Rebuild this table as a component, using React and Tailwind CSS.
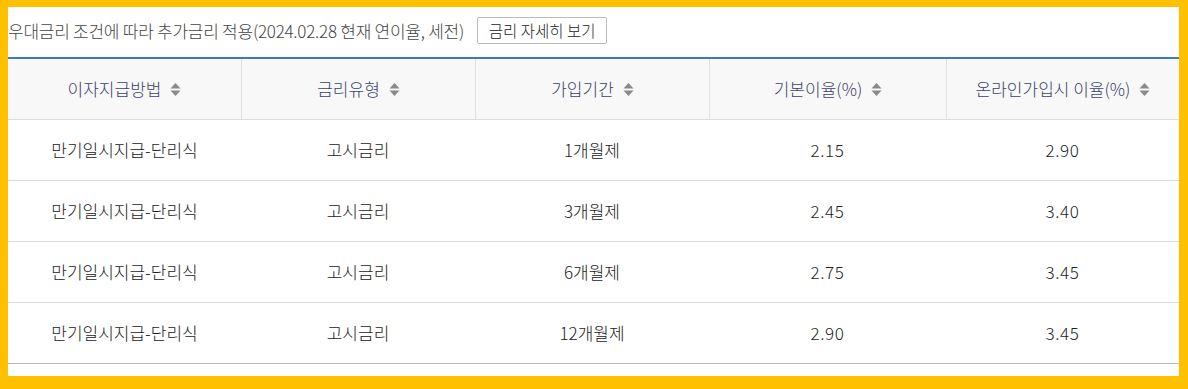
import React from "react";

const rows = [
  ["만기일시지급-단리식", "고시금리", "1개월제", "2.15", "2.90"],
  ["만기일시지급-단리식", "고시금리", "3개월제", "2.45", "3.40"],
  ["만기일시지급-단리식", "고시금리", "6개월제", "2.75", "3.45"],
  ["만기일시지급-단리식", "고시금리", "12개월제", "2.90", "3.45"],
];
const heads = ["이자지급방법", "금리유형", "가입기간", "기본이율(%)", "온라인가입시 이율(%)"];

function SortIcon() {
  return (
    <svg width="11" height="15" viewBox="0 0 11 15" className="ml-[9px]">
      <path d="M5.5 1 L10.5 6.5 H0.5 Z" fill="#8a8a8a" />
      <path d="M5.5 14 L10.5 8.5 H0.5 Z" fill="#8a8a8a" />
    </svg>
  );
}

export default function App() {
  return (
    <div
      className="w-[1188px] h-[389px] bg-[#ffc000] pt-[7px] pl-[8px] pr-[9px] pb-[13px]"
      style={{ fontFamily: '"Noto Sans CJK KR", "Noto Sans", sans-serif' }}
    >
      <div className="bg-white h-full">
        <div className="flex items-center h-[50px] pb-[3px]">
          <span className="text-[17px] font-light text-[#444] tracking-[-0.25px]">
            우대금리 조건에 따라 추가금리 적용(2024.02.28 현재 연이율, 세전)
          </span>
          <button className="ml-[13px] h-[27px] w-[130px] border border-[#bbb] rounded-[2px] text-[15.5px] font-light text-[#222] bg-white flex items-center justify-center">
            금리 자세히 보기
          </button>
        </div>
        <div className="border-t-2 border-[#3a78c8]">
          <div className="grid grid-cols-[233px_234px_234px_237px_1fr] bg-[#f8f8f8] h-[61px] border-b border-[#ddd]">
            {heads.map((h, i) => (
              <div
                key={i}
                className={`flex items-center justify-center text-[17px] font-light text-[#3c4369] ${i > 0 ? "border-l border-[#e0e0e0]" : ""}`}
              >
                {h}
                <SortIcon />
              </div>
            ))}
          </div>
          {rows.map((r, ri) => (
            <div
              key={ri}
              className={`grid grid-cols-[233px_234px_234px_237px_1fr] h-[61px] border-b ${ri === rows.length - 1 ? "border-[#b3bccf]" : "border-[#ddd]"}`}
            >
              {r.map((c, ci) => (
                <div
                  key={ci}
                  className={`flex items-center justify-center text-[17px] font-light text-[#222] ${ci >= 3 ? "tracking-[0.6px]" : ""}`}
                >
                  {c}
                </div>
              ))}
            </div>
          ))}
        </div>
      </div>
    </div>
  );
}
